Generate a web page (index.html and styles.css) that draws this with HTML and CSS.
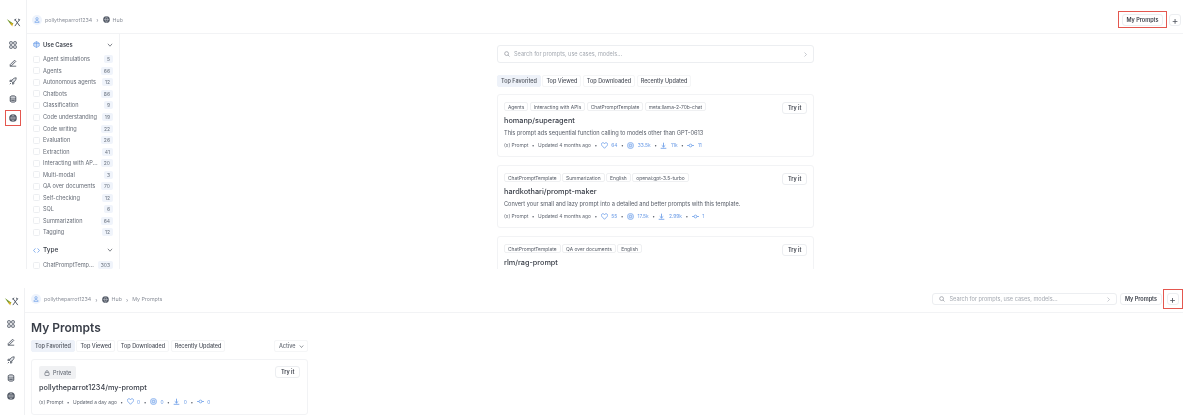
FILE: index.html
```html
<!DOCTYPE html>
<html lang="en">
<head>
<meta charset="utf-8">
<title>LangChain Hub</title>
<link rel="stylesheet" href="styles.css">
</head>
<body>
<svg width="0" height="0" class="defs">
  <symbol id="i-grid" viewBox="0 0 10 10"><g fill="#e4e6ea" stroke="#555c68" stroke-width="1.2"><rect x=".8" y=".8" width="3.4" height="3.4" rx="1"/><rect x="5.8" y=".8" width="3.4" height="3.4" rx="1"/><rect x=".8" y="5.8" width="3.4" height="3.4" rx="1"/><rect x="5.8" y="5.8" width="3.4" height="3.4" rx="1"/></g></symbol>
  <symbol id="i-pen" viewBox="0 0 10 10"><path d="M1 9h8M1.5 7 7 1.5 8.5 3 3 8.500H1.500z" fill="#e4e6ea" stroke="#555c68" stroke-width="1.100"/></symbol>
  <symbol id="i-rocket" viewBox="0 0 10 10"><path d="M9 1C6 1 4 3 3 5.500L4.500 7C7 6 9 4 9 1zM3.500 4H1.500L1 5.500h2M6 6.500V8.500L4.500 9V7M1 9l1.500-1.500" fill="#e4e6ea" stroke="#555c68" stroke-width="1.100"/></symbol>
  <symbol id="i-db" viewBox="0 0 10 10"><path d="M1.500 2.200C1.500 .6 8.500 .6 8.500 2.200V7.800C8.500 9.400 1.500 9.400 1.500 7.800zM1.500 4.200C3 5.200 7 5.200 8.500 4.200M1.500 6.200C3 7.200 7 7.200 8.500 6.200" fill="#c9ccd2" stroke="#555c68" stroke-width="1.100"/></symbol>
  <symbol id="i-globe" viewBox="0 0 10 10"><circle cx="5" cy="5" r="4.800" fill="#555c68"/><path d="M1 5h8M5 1c-2 2-2 6 0 8M5 1c2 2 2 6 0 8" fill="none" stroke="#c9ccd2" stroke-width=".7"/></symbol>
  <symbol id="i-user" viewBox="0 0 10 10"><circle cx="5" cy="3" r="2" fill="none" stroke="#5b93e6" stroke-width="1"/><path d="M1.500 9c0-4 7-4 7 0z" fill="none" stroke="#5b93e6" stroke-width="1"/></symbol>
  <symbol id="i-search" viewBox="0 0 10 10"><circle cx="4.300" cy="4.300" r="3.200" fill="none" stroke="#7d838d" stroke-width="1"/><path d="m6.700 6.700 2.500 2.500" stroke="#7d838d" stroke-width="1"/></symbol>
  <symbol id="i-next" viewBox="0 0 10 10"><path d="m3 1 4 4-4 4" fill="none" stroke="#9aa0a9" stroke-width="1.100"/></symbol>
  <symbol id="i-down" viewBox="0 0 10 10"><path d="m1.500 3 3.500 4 3.500-4" fill="none" stroke="#444a54" stroke-width="1.100"/></symbol>
  <symbol id="i-heart" viewBox="0 0 10 10"><path d="M5 9 1.200 5C-.3 3 1 1 2.800 1 3.900 1 4.600 1.600 5 2.300 5.400 1.600 6.100 1 7.200 1 9 1 10.300 3 8.800 5z" fill="none" stroke="#5b93e6" stroke-width="1"/></symbol>
  <symbol id="i-eye" viewBox="0 0 10 10"><circle cx="5" cy="5" r="4.400" fill="#dfeafb" stroke="#5b93e6" stroke-width=".8"/><circle cx="5" cy="5" r="1.800" fill="none" stroke="#5b93e6" stroke-width=".9"/></symbol>
  <symbol id="i-dl" viewBox="0 0 10 10"><path d="M5 1v6M2.500 4.800 5 7.200l2.500-2.400M1 9h8" fill="none" stroke="#5b93e6" stroke-width="1.100"/></symbol>
  <symbol id="i-fork" viewBox="0 0 10 10"><circle cx="5" cy="5" r="2" fill="none" stroke="#5b93e6" stroke-width="1"/><path d="M0 5h3M7 5h3" stroke="#5b93e6" stroke-width="1"/></symbol>
  <symbol id="i-lock" viewBox="0 0 10 10"><rect x="1.500" y="4" width="7" height="5.200" rx="1" fill="none" stroke="#555c68"/><path d="M3 4V2.800C3 .4 7 .4 7 2.800V4" fill="none" stroke="#555c68"/></symbol>
  <symbol id="i-cube" viewBox="0 0 10 10"><path d="M5 .8 9 3v4.200L5 9.300 1 7.200V3z" fill="#cfe0f8" stroke="#5b93e6" stroke-width=".8"/><path d="M1 3.500h8M5 .8v8.500" stroke="#5b93e6" stroke-width=".7"/></symbol>
  <symbol id="i-code" viewBox="0 0 10 10"><path d="M3.500 2 .8 5l2.700 3M6.500 2l2.700 3-2.700 3" fill="none" stroke="#5b93e6" stroke-width="1"/></symbol>
  <symbol id="i-logo" viewBox="0 0 16 10"><path d="M.500 1 5.500 8l2.500-1.500z" fill="#6f9425"/><path d="M4 5 7.500 6.500 6.500 9.500z" fill="#e0b020"/><path d="M9.500 1.500 15 9M15 1.500 9.500 9M9 2.500l2-1.500M13 1l2 1.500" fill="none" stroke="#555c68" stroke-width="1.100"/></symbol>
</svg>

<section class="panel panel-top">
  <nav class="rail">
    <svg class="logo"><use href="#i-logo"/></svg>
    <svg class="rail-ico"><use href="#i-grid"/></svg>
    <svg class="rail-ico"><use href="#i-pen"/></svg>
    <svg class="rail-ico"><use href="#i-rocket"/></svg>
    <svg class="rail-ico"><use href="#i-db"/></svg>
    <span class="mark"><svg class="rail-ico"><use href="#i-globe"/></svg></span>
  </nav>
  <div class="main">
    <header class="top">
      <div class="crumbs">
        <span class="avatar"><svg class="ico6"><use href="#i-user"/></svg></span><span>pollytheparrot1234</span><span class="sep">›</span>
        <svg class="ico7"><use href="#i-globe"/></svg><span>Hub</span>
      </div>
      <div class="actions">
        <span class="mark mark-btn"><button class="btn">My Prompts</button></span>
        <button class="btn plus">+</button>
      </div>
    </header>
    <div class="body">
      <aside class="filters">
        <h4 class="filter-head"><svg class="ico7"><use href="#i-cube"/></svg><span class="grow">Use Cases</span><svg class="ico6"><use href="#i-down"/></svg></h4>
        <ul class="filter-list">
          <li><i></i><span>Agent simulations</span><b>5</b></li>
          <li><i></i><span>Agents</span><b>66</b></li>
          <li><i></i><span>Autonomous agents</span><b>12</b></li>
          <li><i></i><span>Chatbots</span><b>86</b></li>
          <li><i></i><span>Classification</span><b>9</b></li>
          <li><i></i><span>Code understanding</span><b>19</b></li>
          <li><i></i><span>Code writing</span><b>22</b></li>
          <li><i></i><span>Evaluation</span><b>26</b></li>
          <li><i></i><span>Extraction</span><b>41</b></li>
          <li><i></i><span>Interacting with AP...</span><b>20</b></li>
          <li><i></i><span>Multi-modal</span><b>3</b></li>
          <li><i></i><span>QA over documents</span><b>70</b></li>
          <li><i></i><span>Self-checking</span><b>12</b></li>
          <li><i></i><span>SQL</span><b>6</b></li>
          <li><i></i><span>Summarization</span><b>64</b></li>
          <li><i></i><span>Tagging</span><b>12</b></li>
        </ul>
        <h4 class="filter-head type-head"><svg class="ico7"><use href="#i-code"/></svg><span class="grow">Type</span><svg class="ico6"><use href="#i-down"/></svg></h4>
        <ul class="filter-list">
          <li><i></i><span>ChatPromptTemp...</span><b>303</b></li>
        </ul>
      </aside>
      <div class="center">
        <div class="search search-wide"><svg class="ico6"><use href="#i-search"/></svg><span class="grow">Search for prompts, use cases, models...</span><svg class="ico5"><use href="#i-next"/></svg></div>
        <div class="tabs"><span class="tab on">Top Favorited</span><span class="tab">Top Viewed</span><span class="tab">Top Downloaded</span><span class="tab">Recently Updated</span></div>
        <article class="card">
          <div class="card-main">
            <div class="tags"><span>Agents</span><span>Interacting with APIs</span><span>ChatPromptTemplate</span><span>meta:llama-2-70b-chat</span></div>
            <h3>homanp/superagent</h3>
            <p>This prompt ads sequential function calling to models other than GPT-0613</p>
            <div class="meta"><span>(x) Prompt</span><em>•</em><span>Updated 4 months ago</span><em>•</em><svg><use href="#i-heart"/></svg><a>64</a><em>•</em><svg><use href="#i-eye"/></svg><a>33.5k</a><em>•</em><svg><use href="#i-dl"/></svg><a>11k</a><em>•</em><svg><use href="#i-fork"/></svg><a>11</a></div>
          </div>
          <button class="btn try">Try it</button>
        </article>
        <article class="card">
          <div class="card-main">
            <div class="tags"><span>ChatPromptTemplate</span><span>Summarization</span><span>English</span><span>openai:gpt-3.5-turbo</span></div>
            <h3>hardkothari/prompt-maker</h3>
            <p>Convert your small and lazy prompt into a detailed and better prompts with this template.</p>
            <div class="meta"><span>(x) Prompt</span><em>•</em><span>Updated 4 months ago</span><em>•</em><svg><use href="#i-heart"/></svg><a>55</a><em>•</em><svg><use href="#i-eye"/></svg><a>17.5k</a><em>•</em><svg><use href="#i-dl"/></svg><a>2.99k</a><em>•</em><svg><use href="#i-fork"/></svg><a>1</a></div>
          </div>
          <button class="btn try">Try it</button>
        </article>
        <article class="card">
          <div class="card-main">
            <div class="tags"><span>ChatPromptTemplate</span><span>QA over documents</span><span>English</span></div>
            <h3>rlm/rag-prompt</h3>
          </div>
          <button class="btn try">Try it</button>
        </article>
      </div>
    </div>
  </div>
</section>

<section class="panel panel-bottom">
  <nav class="rail">
    <svg class="logo"><use href="#i-logo"/></svg>
    <svg class="rail-ico"><use href="#i-grid"/></svg>
    <svg class="rail-ico"><use href="#i-pen"/></svg>
    <svg class="rail-ico"><use href="#i-rocket"/></svg>
    <svg class="rail-ico"><use href="#i-db"/></svg>
    <svg class="rail-ico"><use href="#i-globe"/></svg>
  </nav>
  <div class="main">
    <header class="top">
      <div class="crumbs">
        <span class="avatar"><svg class="ico6"><use href="#i-user"/></svg></span><span>pollytheparrot1234</span><span class="sep">›</span>
        <svg class="ico7"><use href="#i-globe"/></svg><span>Hub</span><span class="sep">›</span><span>My Prompts</span>
      </div>
      <div class="actions">
        <div class="search search-small"><svg class="ico6"><use href="#i-search"/></svg><span class="grow">Search for prompts, use cases, models...</span><svg class="ico5"><use href="#i-next"/></svg></div>
        <button class="btn">My Prompts</button>
        <span class="mark mark-plus"><button class="btn plus">+</button></span>
      </div>
    </header>
    <div class="mine">
      <h1>My Prompts</h1>
      <div class="tabs-row">
        <div class="tabs"><span class="tab on">Top Favorited</span><span class="tab">Top Viewed</span><span class="tab">Top Downloaded</span><span class="tab">Recently Updated</span></div>
        <span class="tab active-sel">Active <svg class="ico5"><use href="#i-down"/></svg></span>
      </div>
      <article class="card card-mine">
        <div class="card-main">
          <span class="private"><svg class="ico6"><use href="#i-lock"/></svg>Private</span>
          <h3>pollytheparrot1234/my-prompt</h3>
          <div class="meta"><span>(x) Prompt</span><em>•</em><span>Updated a day ago</span><em>•</em><svg><use href="#i-heart"/></svg><a>0</a><em>•</em><svg><use href="#i-eye"/></svg><a>0</a><em>•</em><svg><use href="#i-dl"/></svg><a>0</a><em>•</em><svg><use href="#i-fork"/></svg><a>0</a></div>
        </div>
        <button class="btn try">Try it</button>
      </article>
    </div>
  </div>
</section>
</body>
</html>
```

FILE: styles.css
```css
* { box-sizing: border-box; }
html, body { margin: 0; padding: 0; background: #fff; overflow: hidden; }
body {
  width: 1200px;
  height: 415px;
  font-family: Inter, "Liberation Sans", sans-serif;
  font-size: 5.500px;
  color: #555b66;
  filter: blur(0.5px);
}
.defs { display: block; height: 0; }
h1, h3, h4, p, ul { margin: 0; padding: 0; }
ul { list-style: none; }
button { font-family: inherit; margin: 0; }
a { color: #6a9be6; }
em { font-style: normal; color: #555b66; }
.grow { flex: 1; }

.ico5 { width: 5px; height: 5px; flex: none; }
.ico6 { width: 6px; height: 6px; flex: none; }
.ico7 { width: 7px; height: 7px; flex: none; }

.panel { display: flex; overflow: hidden; }
.panel-top { height: 269px; margin-bottom: 19px; }
.panel-bottom { height: 127px; }

.rail {
  flex: none;
  width: 27px;
  border-right: 1px solid #f0f1f3;
  display: flex;
  flex-direction: column;
  align-items: center;
  padding-top: 18px;
  gap: 10px;
}
.panel-bottom .rail { width: 25px; padding-top: 9px; padding-right: 2px; }
.logo { width: 15px; height: 9px; margin-bottom: 4px; }
.rail-ico { width: 8px; height: 8px; display: block; }
.mark { outline: 1.500px solid #e4574f; display: inline-flex; }
.rail > .mark { padding: 3px; margin: -2px 0 -3px; }
.mark-btn { padding: 1.500px 3px; }
.mark-plus { padding: 3px; margin-left: -1px; }

.main { flex: 1; min-width: 0; display: flex; flex-direction: column; }
.top {
  flex: none;
  height: 34px;
  margin-right: 17px;
  border-bottom: 1px solid #f2f3f5;
  display: flex;
  align-items: center;
  justify-content: space-between;
  padding: 6px 2px 0 5px;
}
.panel-bottom .top { height: 25px; padding: 0 1.500px 2px 6px; }
.crumbs { display: flex; align-items: center; gap: 3px; color: #8b909a; font-size: 5.300px; }
.avatar {
  width: 10px; height: 10px; border-radius: 50%;
  background: #eef3fc;
  display: flex; align-items: center; justify-content: center;
}
.sep { margin: 0 1px; font-size: 6px; }
.actions { display: flex; align-items: center; gap: 3px; }

.btn {
  background: #fff;
  border: 1px solid #eceef1;
  border-radius: 3px;
  color: #3a3f49;
  font-size: 5.500px;
  font-weight: 600;
  height: 12px;
  padding: 0 3.500px;
  display: flex;
  align-items: center;
  white-space: nowrap;
}
.plus { width: 12px; justify-content: center; padding: 0; font-size: 10px; font-weight: 400; color: #4e535d; }

.body { flex: 1; min-height: 0; display: flex; }
.filters {
  flex: none;
  width: 93px;
  border-right: 1px solid #f2f3f5;
  padding: 6px 6px 0 6px;
}
.filter-head {
  display: flex; align-items: center; gap: 3px;
  color: #3a3f49; font-size: 5.800px; font-weight: 600;
  height: 9px; margin-bottom: 4.500px;
}
.type-head { margin-top: 7.500px; font-size: 6.500px; font-weight: 500; margin-bottom: 4.500px; }
.filter-list li { display: flex; align-items: center; height: 11.560px; color: #656b76; font-size: 5.600px; }
.filter-list span { flex: 1; white-space: nowrap; overflow: hidden; }
.filter-list i {
  width: 7px; height: 7px; border: 1px solid #eceef1; border-radius: 1.500px;
  margin-right: 3px; flex: none;
}
.filter-list b {
  font-weight: 400; font-size: 5px; color: #6b7480;
  background: #f0f4fb; border-radius: 2px; padding: 1px 3px; min-width: 8px; text-align: center;
}

.center { flex: 1; display: flex; flex-direction: column; align-items: center; padding-top: 11px; padding-right: 9px; }
.center > * { width: 317px; flex: none; }
.search {
  display: flex; align-items: center; gap: 4px;
  border: 1px solid #eceef1; border-radius: 3px;
  color: #a4a9b1; font-size: 5.600px;
  padding: 0 5px 0 6px;
}
.search-wide { height: 18px; margin-bottom: 12px; }
.search-small { width: 185px; height: 12px; }

.tabs { display: flex; gap: 1.500px; margin-bottom: 7px; }
.tab {
  height: 12px; padding: 0 3px; border: 1px solid #f5f6f7; border-radius: 2px;
  color: #4e535d; font-size: 5.500px; font-weight: 500;
  display: flex; align-items: center; gap: 2px; white-space: nowrap;
}
.tab.on { background: #eef2f9; border-color: #eef2f9; }

.card {
  display: flex; align-items: flex-start; justify-content: space-between;
  border: 1px solid #f2f3f5; border-radius: 3px;
  padding: 7px 6px 6px 6px;
  height: 63px;
  margin-bottom: 8px;
  background: #fff;
}
.card-main { min-width: 0; }
.tags { display: flex; gap: 1.500px; margin-bottom: 5px; }
.tags span {
  height: 9px; padding: 0 3px; display: flex; align-items: center;
  border: 1px solid #eff0f2; border-radius: 2px;
  font-size: 4.900px; color: #545a65; white-space: nowrap;
}
.card h3 { font-size: 7.300px; font-weight: 500; color: #3a3f49; line-height: 10px; margin-bottom: 4px; }
.card p { font-size: 5.650px; color: #555b66; line-height: 7px; margin-bottom: 4.500px; }
.meta { display: flex; align-items: center; gap: 3.500px; font-size: 4.900px; color: #5f6570; white-space: nowrap; }
.meta svg { width: 7px; height: 7px; flex: none; }
.try { height: 12px; padding: 0 4.500px; }

.mine { padding: 7px 0 0 6px; width: 283px; flex: none; }
.mine h1 { font-size: 12px; font-weight: 600; color: #3a3f49; line-height: 15px; margin-bottom: 5px; }
.tabs-row { display: flex; justify-content: space-between; align-items: center; margin-bottom: 7px; }
.tabs-row .tabs { margin: 0; }
.active-sel { color: #666b75; padding: 0 3.500px; gap: 3px; }
.card-mine { height: 56px; padding: 6px 7px; }
.private {
  display: inline-flex; align-items: center; gap: 3px;
  background: #f0f1f3; border-radius: 2px;
  height: 13px; padding: 0 5px; color: #555b66; font-size: 5.500px;
  margin-bottom: 4px;
}
.card-mine h3 { font-size: 7.300px; margin-bottom: 5px; }
```
